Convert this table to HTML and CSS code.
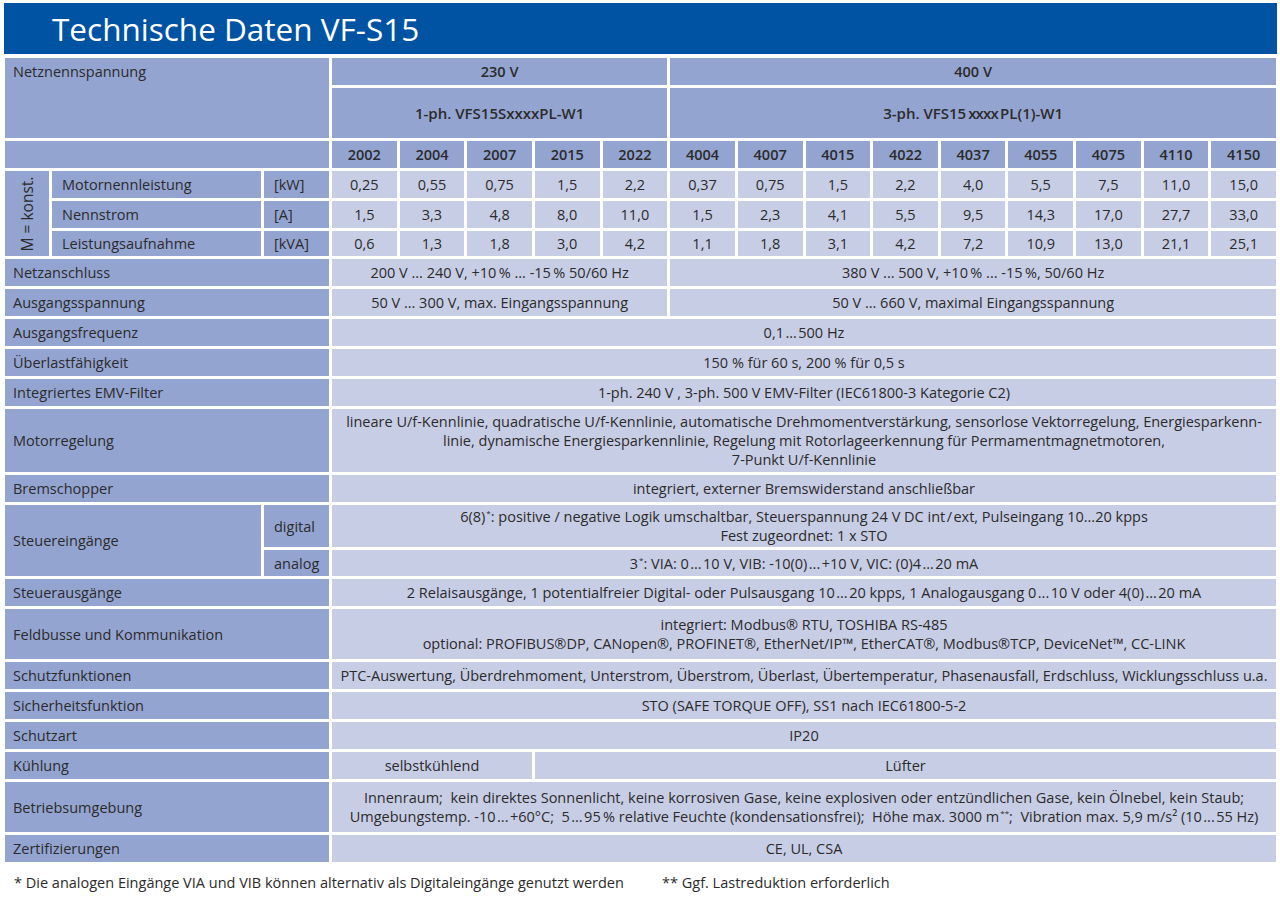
FILE: index.html
```html
<!DOCTYPE html>
<html lang="de">
<head>
<meta charset="utf-8">
<title>Technische Daten VF-S15</title>
<link rel="stylesheet" href="styles.css">
</head>
<body>
<div class="page">
  <header class="title">Technische Daten VF-S15</header>
  <div class="spec">
    <div class="lab s3 r2 top">Netznennspannung</div>
    <div class="hd s5">230 V</div>
    <div class="hd s9">400 V</div>
    <div class="hd s5 thin">1-ph. VFS15SxxxxPL-W1</div>
    <div class="hd s9 thin"><span>3-ph. VFS15<span class="tight">xxxx</span>PL(1)-W1</span></div>

    <div class="lab s3"></div>
    <div class="hd">2002</div><div class="hd">2004</div><div class="hd">2007</div><div class="hd">2015</div><div class="hd">2022</div>
    <div class="hd">4004</div><div class="hd">4007</div><div class="hd">4015</div><div class="hd">4022</div><div class="hd">4037</div>
    <div class="hd">4055</div><div class="hd">4075</div><div class="hd">4110</div><div class="hd">4150</div>

    <div class="lab r3 vert"><span>M = konst.</span></div>
    <div class="lab sub">Motornennleistung</div>
    <div class="lab sub">[kW]</div>
    <div class="val">0,25</div><div class="val">0,55</div><div class="val">0,75</div><div class="val">1,5</div><div class="val">2,2</div>
    <div class="val">0,37</div><div class="val">0,75</div><div class="val">1,5</div><div class="val">2,2</div><div class="val">4,0</div>
    <div class="val">5,5</div><div class="val">7,5</div><div class="val">11,0</div><div class="val">15,0</div>

    <div class="lab sub">Nennstrom</div>
    <div class="lab sub">[A]</div>
    <div class="val">1,5</div><div class="val">3,3</div><div class="val">4,8</div><div class="val">8,0</div><div class="val">11,0</div>
    <div class="val">1,5</div><div class="val">2,3</div><div class="val">4,1</div><div class="val">5,5</div><div class="val">9,5</div>
    <div class="val">14,3</div><div class="val">17,0</div><div class="val">27,7</div><div class="val">33,0</div>

    <div class="lab sub">Leistungsaufnahme</div>
    <div class="lab sub">[kVA]</div>
    <div class="val">0,6</div><div class="val">1,3</div><div class="val">1,8</div><div class="val">3,0</div><div class="val">4,2</div>
    <div class="val">1,1</div><div class="val">1,8</div><div class="val">3,1</div><div class="val">4,2</div><div class="val">7,2</div>
    <div class="val">10,9</div><div class="val">13,0</div><div class="val">21,1</div><div class="val">25,1</div>

    <div class="lab s3">Netzanschluss</div>
    <div class="val s5">200 V ... 240 V, +10&#8201;% ... -15&#8201;% 50/60 Hz</div>
    <div class="val s9">380 V ... 500 V, +10&#8201;% ... -15&#8201;%, 50/60 Hz</div>

    <div class="lab s3">Ausgangsspannung</div>
    <div class="val s5">50 V ... 300 V, max. Eingangsspannung</div>
    <div class="val s9">50 V ... 660 V, maximal Eingangsspannung</div>

    <div class="lab s3">Ausgangsfrequenz</div>
    <div class="val s14">0,1&#8202;...&#8202;500 Hz</div>

    <div class="lab s3">Überlastfähigkeit</div>
    <div class="val s14">150 % für 60 s, 200 % für 0,5 s</div>

    <div class="lab s3">Integriertes EMV-Filter</div>
    <div class="val s14">1-ph. 240 V , 3-ph. 500 V EMV-Filter (IEC61800-3 Kategorie C2)</div>

    <div class="lab s3">Motorregelung</div>
    <div class="val s14 multi"><span>lineare U/f-Kennlinie, quadratische U/f-Kennlinie, automatische Drehmomentverstärkung, sensorlose Vektorregelung, Energiesparkenn-<br>linie, dynamische Energiesparkennlinie, Regelung mit Rotorlageerkennung für Permamentmagnetmotoren,<br>7-Punkt U/f-Kennlinie</span></div>

    <div class="lab s3">Bremschopper</div>
    <div class="val s14">integriert, externer Bremswiderstand anschließbar</div>

    <div class="lab s2 r2">Steuereingänge</div>
    <div class="lab sub">digital</div>
    <div class="val s14 multi"><span>6(8)<sup>*</sup>: positive / negative Logik umschaltbar, Steuerspannung 24 V DC int&#8202;/&#8202;ext, Pulseingang 10...20 kpps<br>Fest zugeordnet: 1 x STO</span></div>
    <div class="lab sub">analog</div>
    <div class="val s14"><span>3<sup>*</sup>: VIA: 0&#8202;...&#8202;10 V, VIB: -10(0)&#8202;...&#8202;+10 V, VIC: (0)4&#8202;...&#8202;20 mA</span></div>

    <div class="lab s3">Steuerausgänge</div>
    <div class="val s14">2 Relaisausgänge, 1 potentialfreier Digital- oder Pulsausgang 10&#8202;...&#8202;20 kpps, 1 Analogausgang 0&#8202;...&#8202;10 V oder 4(0)&#8202;...&#8202;20 mA</div>

    <div class="lab s3">Feldbusse und Kommunikation</div>
    <div class="val s14 multi"><span>integriert: Modbus® RTU, TOSHIBA RS-485<br>optional: PROFIBUS®DP, CANopen®, PROFINET®, EtherNet/IP™, EtherCAT®, Modbus®TCP, DeviceNet™, CC-LINK</span></div>

    <div class="lab s3">Schutzfunktionen</div>
    <div class="val s14">PTC-Auswertung, Überdrehmoment, Unterstrom, Überstrom, Überlast, Übertemperatur, Phasenausfall, Erdschluss, Wicklungsschluss u.a.</div>

    <div class="lab s3">Sicherheitsfunktion</div>
    <div class="val s14">STO (SAFE TORQUE OFF), SS1 nach IEC61800-5-2</div>

    <div class="lab s3">Schutzart</div>
    <div class="val s14">IP20</div>

    <div class="lab s3">Kühlung</div>
    <div class="val s3">selbstkühlend</div>
    <div class="val s11">Lüfter</div>

    <div class="lab s3">Betriebsumgebung</div>
    <div class="val s14 multi"><span>Innenraum;&#160; kein direktes Sonnenlicht, keine korrosiven Gase, keine explosiven oder entzündlichen Gase, kein Ölnebel, kein Staub;<br>Umgebungstemp. -10&#8202;...&#8202;+60°C;&#160; 5&#8202;...&#8202;95&#8201;% relative Feuchte (kondensationsfrei);&#160; Höhe max. 3000 m<sup>**</sup>;&#160; Vibration max. 5,9 m/s² (10&#8202;...&#8202;55 Hz)</span></div>

    <div class="lab s3">Zertifizierungen</div>
    <div class="val s14">CE, UL, CSA</div>
  </div>
  <div class="notes">
    <span class="note1">* Die analogen Eingänge VIA und VIB können alternativ als Digitaleingänge genutzt werden</span>
    <span>** Ggf. Lastreduktion erforderlich</span>
  </div>
</div>
</body>
</html>
```

FILE: styles.css
```css
html, body {
  margin: 0;
  padding: 0;
  background: #ffffff;
}

.page {
  width: 1271px;
  padding: 3px 0 0 5px;
  font-family: "Open Sans", "Noto Sans", "Liberation Sans", sans-serif;
  color: #2b2b2b;
}

.title {
  margin: 0 -1px;
  height: 51px;
  background: #0053a3;
  color: #ffffff;
  font-size: 31.5px;
  line-height: 51px;
  padding-left: 48px;
  box-sizing: border-box;
}

.spec {
  margin-top: 4px;
  display: grid;
  grid-template-columns: 44px 209px 65px repeat(14, 1fr);
  grid-template-rows: 27px 50px 27px 27px 27px 25px 27px 27px 27px 27px 27px 63px 27px 42px 26px 27px 50px 27px 27px 27px 27px 50px 27px;
  gap: 3px;
  font-size: 14.5px;
}

.spec > div {
  display: flex;
  align-items: center;
  min-width: 0;
  white-space: nowrap;
}

.lab {
  background: #94a4d1;
  padding-left: 8px;
}

.lab.sub {
  padding-left: 10px;
}

.lab.top {
  align-items: flex-start !important;
  padding-top: 4px;
}

.hd {
  background: #94a4d1;
  justify-content: center;
  font-weight: 600;
}

.hd.thin {
  font-size: 15px;
  padding-bottom: 1px;
}

.tight {
  letter-spacing: -0.8px;
  margin-left: 2px;
  margin-right: 2px;
}

.val {
  background: #c8cde6;
  justify-content: center;
  text-align: center;
}

.multi {
  line-height: 19px;
}

.vert {
  justify-content: center;
  padding-left: 0 !important;
}

.vert span {
  display: block;
  transform: rotate(-90deg);
  white-space: nowrap;
  font-size: 15.5px;
}

sup {
  font-size: 8px;
  line-height: 0;
  vertical-align: 6px;
  margin-left: 1px;
}

.s2 { grid-column: span 2; }
.s3 { grid-column: span 3; }
.s5 { grid-column: span 5; }
.s9 { grid-column: span 9; }
.s11 { grid-column: span 11; }
.s14 { grid-column: span 14; }
.r2 { grid-row: span 2; }
.r3 { grid-row: span 3; }

.notes {
  display: flex;
  padding: 11px 0 0 9px;
  font-size: 14.5px;
  color: #2b2b2b;
}

.note1 {
  width: 648px;
}
```
